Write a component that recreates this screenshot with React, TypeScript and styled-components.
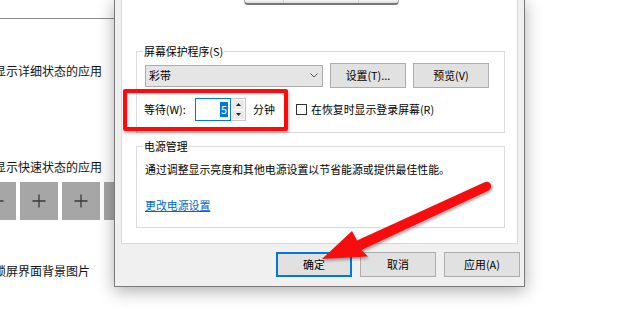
import * as React from "react";
import styled, { createGlobalStyle } from "styled-components";

const GlobalStyle = createGlobalStyle`
  html, body {
    margin: 0;
    padding: 0;
    background: #ffffff;
  }
  body {
    font-family: "Noto Sans CJK SC", "Noto Sans", sans-serif;
    color: #000000;
  }
`;

const Page = styled.div`
  position: relative;
  width: 620px;
  height: 309px;
  overflow: hidden;
  background: #ffffff;
`;

// Settings page behind the dialog
const Settings = styled.div`
  display: flex;
  flex-direction: column;
  margin-left: -6px;
`;

const Divider = styled.div`
  margin-top: 18px;
  height: 1px;
  width: 200px;
  background: #8c8c8c;
  margin-left: 6px;
`;

const SettingText = styled.div<{ $gap: number }>`
  margin-top: ${(p) => p.$gap}px;
  font-size: 12px;
  line-height: 18px;
  color: #111111;
  white-space: nowrap;
`;

const Tiles = styled.div`
  display: flex;
  gap: 4px;
  margin-top: 6px;
  margin-left: -16px;
`;

const Tile = styled.div`
  width: 38px;
  height: 38px;
  background: #a6a6a6;
  display: flex;
  align-items: center;
  justify-content: center;
`;

// Dialog window
const Dialog = styled.div`
  position: absolute;
  left: 114px;
  top: -1px;
  width: 411px;
  height: 288px;
  box-sizing: border-box;
  border: 1px solid #7a7a7a;
  background: #f0f0f0;
  box-shadow: 0 4px 16px rgba(0, 0, 0, 0.32);
  display: flex;
  flex-direction: column;
  padding: 0 6px;
  font-size: 10.9px;
  line-height: 15px;
`;

const TabPage = styled.div`
  height: 244px;
  box-sizing: border-box;
  background: #ffffff;
  border: 1px solid #d9d9d9;
  border-top: none;
  display: flex;
  flex-direction: column;
  padding: 0 12px 0 14px;
`;

const MonitorRow = styled.div`
  display: flex;
  justify-content: center;
  margin-right: -2px;
`;

const MonitorBase = styled.div`
  width: 155px;
  height: 5px;
  box-sizing: border-box;
  background: linear-gradient(#f6f6f6, #dcdcdc);
  border: 1px solid #a8a8a8;
  border-top: none;
  border-bottom: 2px solid #777777;
  border-radius: 0 0 4px 4px;
  display: flex;
  padding-left: 38px;
  gap: 74px;
`;

const StandLine = styled.div`
  width: 1px;
  background: #cfcfcf;
`;

const GroupBox = styled.div<{ $top: number; $bottom: number }>`
  margin-top: ${(p) => p.$top}px;
  border: 1px solid #dcdcdc;
  padding: 0 8px ${(p) => p.$bottom}px 8px;
  display: flex;
  flex-direction: column;
`;

const GroupTitle = styled.div`
  margin-top: -8px;
  margin-left: -2px;
  padding: 0 1px;
  width: fit-content;
  background: #ffffff;
`;

const Row = styled.div<{ $top: number }>`
  display: flex;
  align-items: center;
  margin-top: ${(p) => p.$top}px;
  white-space: nowrap;
`;

const Select = styled.div`
  width: 178px;
  height: 22px;
  box-sizing: border-box;
  border: 1px solid #adadad;
  background: #e5e5e5;
  display: flex;
  align-items: center;
  justify-content: space-between;
  padding: 0 4px 0 3px;
  margin-right: 7px;
`;

const Button = styled.div<{ $default?: boolean }>`
  width: 76px;
  height: 25px;
  box-sizing: border-box;
  border: 1px solid ${(p) => (p.$default ? "#0078d7" : "#adadad")};
  box-shadow: ${(p) => (p.$default ? "inset 0 0 0 1px #0078d7" : "none")};
  background: #e1e1e1;
  display: flex;
  align-items: center;
  justify-content: center;
`;

const ButtonGap = styled.div`
  width: 7px;
`;

const WaitLabel = styled.span`
  margin-left: -1px;
  width: 51px;
`;

const Spin = styled.div`
  display: flex;
  height: 23px;
`;

const SpinInput = styled.div`
  width: 36px;
  box-sizing: border-box;
  border: 1px solid #0078d7;
  background: #ffffff;
  display: flex;
  align-items: center;
  justify-content: flex-end;
  padding-right: 2px;
`;

const Selected = styled.span`
  background: #0078d7;
  color: #ffffff;
  padding: 0 1px;
  line-height: 15px;
`;

const SpinButtons = styled.div`
  width: 15px;
  display: flex;
  flex-direction: column;
  border: 1px solid #c8c8c8;
  border-left: none;
  box-sizing: border-box;
`;

const SpinButton = styled.div`
  flex: 1;
  background: #e9e9e9;
  border: 1px solid #f8f8f8;
  display: flex;
  align-items: center;
  justify-content: center;
`;

const Unit = styled.span`
  margin-left: 7px;
  width: 43px;
`;

const CheckBox = styled.div`
  width: 11px;
  height: 11px;
  box-sizing: border-box;
  border: 1px solid #333333;
  background: #ffffff;
  margin-right: 4px;
`;

const Link = styled.span`
  color: #0066cc;
  text-decoration: underline;
  width: fit-content;
`;

const ButtonBar = styled.div`
  display: flex;
  justify-content: flex-end;
  gap: 8px;
  padding: 8px 0 0 0;
  margin-right: -2px;
`;

// Annotations
const Highlight = styled.div`
  position: absolute;
  left: 123px;
  top: 89px;
  width: 165px;
  height: 42px;
  box-sizing: border-box;
  border: 4px solid #ff0a0a;
  border-radius: 2px;
  box-shadow: 1px 2px 3px rgba(0, 0, 0, 0.3), inset 1px 1px 2px rgba(0, 0, 0, 0.2);
`;

const ArrowLayer = styled.svg`
  position: absolute;
  left: 0;
  top: 0;
  pointer-events: none;
`;

const PlusIcon = () => (
  <svg width="14" height="14" viewBox="0 0 14 14">
    <path d="M7 0.5V13.5M0.5 7H13.5" stroke="#3a3a3a" strokeWidth="1.3" />
  </svg>
);

const Chevron = () => (
  <svg width="8" height="5" viewBox="0 0 8 5">
    <path d="M0.5 0.5L4 4L7.5 0.5" stroke="#555" strokeWidth="1" fill="none" />
  </svg>
);

const Tri = ({ up }: { up: boolean }) => (
  <svg width="5" height="3" viewBox="0 0 5 3">
    <path d={up ? "M0 3L2.5 0L5 3Z" : "M0 0L2.5 3L5 0Z"} fill="#222" />
  </svg>
);

export default function App() {
  return (
    <Page>
      <GlobalStyle />
      <Settings>
        <Divider />
        <SettingText $gap={43}>显示详细状态的应用</SettingText>
        <SettingText $gap={78}>显示快速状态的应用</SettingText>
        <Tiles>
          {[0, 1, 2, 3].map((i) => (
            <Tile key={i}>
              <PlusIcon />
            </Tile>
          ))}
        </Tiles>
        <SettingText $gap={42}>锁屏界面背景图片</SettingText>
      </Settings>

      <Dialog>
        <TabPage>
          <MonitorRow>
            <MonitorBase>
              <StandLine />
              <StandLine />
            </MonitorBase>
          </MonitorRow>

          <GroupBox $top={46} $bottom={11}>
            <GroupTitle>屏幕保护程序(S)</GroupTitle>
            <Row $top={4}>
              <Select>
                <span>彩带</span>
                <Chevron />
              </Select>
              <Button>设置(T)...</Button>
              <ButtonGap />
              <Button>预览(V)</Button>
            </Row>
            <Row $top={10}>
              <WaitLabel>等待(W):</WaitLabel>
              <Spin>
                <SpinInput>
                  <Selected>5</Selected>
                </SpinInput>
                <SpinButtons>
                  <SpinButton>
                    <Tri up />
                  </SpinButton>
                  <SpinButton>
                    <Tri up={false} />
                  </SpinButton>
                </SpinButtons>
              </Spin>
              <Unit>分钟</Unit>
              <CheckBox />
              <span>在恢复时显示登录屏幕(R)</span>
            </Row>
          </GroupBox>

          <GroupBox $top={13} $bottom={14}>
            <GroupTitle>电源管理</GroupTitle>
            <Row $top={8}>通过调整显示亮度和其他电源设置以节省能源或提供最佳性能。</Row>
            <Row $top={21}>
              <Link>更改电源设置</Link>
            </Row>
          </GroupBox>
        </TabPage>

        <ButtonBar>
          <Button $default>确定</Button>
          <Button>取消</Button>
          <Button>应用(A)</Button>
        </ButtonBar>
      </Dialog>

      <Highlight />

      <ArrowLayer width="620" height="309" viewBox="0 0 620 309">
        <defs>
          <filter id="arrowShadow" x="-10%" y="-10%" width="130%" height="140%">
            <feDropShadow dx="1" dy="2" stdDeviation="1.6" floodColor="#000" floodOpacity="0.35" />
          </filter>
        </defs>
        <path
          d="M322 259 L352 231 L357 240.5 L484 182.5 C488 180.5 491.5 183 491 187 C490.5 189.5 489 190.5 486.5 191.5 L361.5 250 L368 256.5 Z"
          fill="#f70d0d"
          filter="url(#arrowShadow)"
        />
      </ArrowLayer>
    </Page>
  );
}
